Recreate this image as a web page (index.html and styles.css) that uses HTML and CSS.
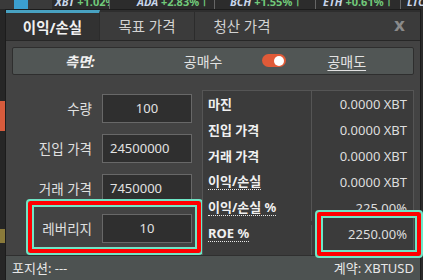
FILE: index.html
```
<!DOCTYPE html>
<html lang="ko">
<head>
    <meta charset="UTF-8">
    <title>계산기</title>
    <link rel="stylesheet" href="styles.css">
</head>
<body>
    <div class="ticker">
        <div class="tick-pad"><span class="blue-block"></span></div>
        <div class="tick t1"><span class="sym">XBT</span> <span class="up">+1.02%&#8593;</span></div>
        <div class="tick t2"><span class="sym">ADA</span> <span class="up">+2.83%&#8593;</span></div>
        <div class="tick t3"><span class="sym">BCH</span> <span class="up">+1.55%&#8593;</span></div>
        <div class="tick t4"><span class="sym">ETH</span> <span class="up">+0.61%&#8593;</span></div>
        <div class="tick t5"><span class="sym">LTC</span></div>
    </div>

    <div class="stage">
        <div class="edge">
            <span class="edge-mark orange"></span>
            <span class="edge-mark yellow"></span>
        </div>

        <div class="dialog">
            <!-- Tabs -->
            <div class="tabs">
                <div class="tab active">이익/손실</div>
                <div class="tab">목표 가격</div>
                <div class="tab">청산 가격</div>
                <div class="close">x</div>
            </div>

            <div class="panel">
                <div class="side-row">
                    <span class="side-label">측면:</span>
                    <span class="side-opt">공매수</span>
                    <span class="toggle"><span class="knob"></span></span>
                    <span class="side-opt selected">공매도</span>
                </div>

                <div class="calc">
                    <div class="fields">
                        <div class="field">
                            <label>수량</label>
                            <div class="input center">100</div>
                        </div>
                        <div class="field">
                            <label>진입 가격</label>
                            <div class="input">24500000</div>
                        </div>
                        <div class="field">
                            <label>거래 가격</label>
                            <div class="input">7450000</div>
                        </div>
                        <div class="field">
                            <label>레버리지</label>
                            <div class="input center">10</div>
                        </div>
                        <div class="mark mark-leverage"></div>
                    </div>

                    <div class="results">
                        <div class="res-row"><span class="res-label">마진</span><span class="res-value">0.0000 XBT</span></div>
                        <div class="res-row"><span class="res-label">진입 가격</span><span class="res-value">0.0000 XBT</span></div>
                        <div class="res-row"><span class="res-label">거래 가격</span><span class="res-value">0.0000 XBT</span></div>
                        <div class="res-row"><span class="res-label"><u>이익/손실</u></span><span class="res-value">0.0000 XBT</span></div>
                        <div class="res-row"><span class="res-label"><u>이익/손실 %</u></span><span class="res-value">225.00%</span></div>
                        <div class="res-row last"><span class="res-label"><u>ROE %</u></span><span class="res-value">2250.00%</span></div>
                        <div class="mark mark-roe"></div>
                    </div>
                </div>
            </div>

            <!-- Status bar -->
            <div class="footer">
                <span>포지션: ---</span>
                <span>계약: XBTUSD</span>
            </div>
        </div>
    </div>
</body>
</html>
```

FILE: styles.css
```
body {
    margin: 0;
    width: 423px;
    height: 280px;
    overflow: hidden;
    background-color: #2b2b2b;
    font-family: "Noto Sans", "Noto Sans CJK KR", sans-serif;
    color: #e2e2e2;
}

/* Ticker (only its lower edge shows above the dialog) */
.ticker {
    display: flex;
    height: 9px;
    overflow: hidden;
    background-color: #2c2c2c;
    font-size: 11px;
}

.ticker > div {
    flex-shrink: 0;
    box-sizing: border-box;
    height: 9px;
    overflow: hidden;
}

.tick-pad {
    width: 52px;
    background-color: #3a3a3a;
}

.blue-block {
    display: block;
    width: 14px;
    height: 9px;
    margin-left: 14px;
    background-color: #3b9fcf;
}

.tick {
    border-right: 1px solid #666;
    white-space: nowrap;
    line-height: 3px;
    font-weight: bold;
}

.t1 { width: 58px; padding-left: 3px; }
.t2 { width: 105px; padding-left: 27px; }
.t3 { width: 101px; padding-left: 15px; }
.t4 { width: 85px; padding-left: 7px; }
.t5 { width: 22px; padding-left: 6px; border-right: none; }

.sym {
    font-style: italic;
    color: #c9d6ea;
}

.up {
    color: #71c97a;
}

/* Page behind the dialog */
.stage {
    display: flex;
    height: 271px;
}

.edge {
    display: flex;
    flex-direction: column;
    width: 5px;
    background-color: #262626;
}

.edge-mark {
    display: block;
    width: 5px;
}

.edge-mark.orange {
    height: 30px;
    margin-top: 92px;
    background-color: #d75b3c;
}

.edge-mark.yellow {
    height: 14px;
    margin-top: 98px;
    background-color: #8a7a3a;
}

/* Dialog */
.dialog {
    display: flex;
    flex-direction: column;
    width: 414px;
    border: 1px solid #1c1c1c;
    border-bottom: none;
    background-color: #434343;
}

.tabs {
    display: flex;
    height: 29px;
    background-color: #3b3b3b;
    border-top: 2px solid #2e2e2e;
    border-bottom: 1px solid #272727;
}

.tab {
    display: flex;
    align-items: center;
    justify-content: center;
    width: 94px;
    border-right: 1px solid #2c2c2c;
    font-size: 14.5px;
    color: #d2d2d2;
}

.tab.active {
    width: 93px;
    margin-top: -2px;
    border-top: 3px solid #48a2c2;
    background-color: #323232;
    color: #f0f0f0;
    font-weight: bold;
}

.tab:nth-child(3) {
    border-right: none;
}

.close {
    margin-left: auto;
    width: 26px;
    padding-top: 3px;
    font-family: "DejaVu Sans", sans-serif;
    font-size: 17px;
    font-weight: bold;
    color: #8a8a8a;
}

.panel {
    display: flex;
    flex-direction: column;
    height: 216px;
    padding: 6px 6px 0 6px;
}

.side-row {
    display: flex;
    align-items: center;
    height: 26px;
    border: 1px solid #2e2e2e;
    border-radius: 2px;
    background-color: #515655;
    font-size: 14px;
}

.side-label {
    margin-left: 52px;
    font-weight: bold;
    font-style: italic;
    color: #f2f2f2;
}

.side-opt {
    margin-left: 89px;
}

.side-opt.selected {
    margin-left: 41px;
    text-decoration: underline;
    text-underline-offset: 3px;
}

.toggle {
    display: flex;
    justify-content: flex-end;
    align-items: center;
    width: 24px;
    height: 13px;
    margin-left: 40px;
    padding: 0 2px;
    box-sizing: border-box;
    border-radius: 7px;
    background-color: #e05a38;
}

.knob {
    width: 10px;
    height: 10px;
    border-radius: 50%;
    background-color: #fff;
}

.calc {
    display: flex;
    gap: 10px;
    margin-top: 15px;
}

.fields {
    position: relative;
    display: flex;
    flex-direction: column;
    gap: 11px;
    padding-top: 4px;
}

.field {
    display: flex;
    align-items: center;
    gap: 10px;
}

.field label {
    width: 80px;
    text-align: right;
    font-size: 13.5px;
    color: #e0e0e0;
}

.input {
    height: 27px;
    width: 81px;
    padding-left: 7px;
    border: 1px solid #686868;
    background-color: #2f2f2f;
    font-size: 13px;
    line-height: 27px;
}

.input.center {
    width: 88px;
    padding-left: 0;
    text-align: center;
}

/* Results table */
.results {
    position: relative;
    display: flex;
    flex-direction: column;
    width: 211px;
    border: 1px solid #555;
    border-bottom: none;
    background-color: #3b3b3b;
}

.res-row {
    display: flex;
    height: 26px;
    align-items: center;
    font-size: 13px;
}

.res-row.last {
    height: 34px;
    align-items: flex-start;
    padding-top: 4px;
    box-sizing: border-box;
}

.res-label {
    display: flex;
    align-items: center;
    width: 103px;
    height: 100%;
    padding-left: 5px;
    border-right: 1px solid #555;
    font-weight: bold;
    color: #f0f0f0;
}

.res-row.last .res-label {
    align-items: flex-start;
}

.res-label u {
    text-decoration: none;
    border-bottom: 1px dotted #e8e8e8;
    line-height: 16px;
}

.res-value {
    flex: 1;
    text-align: right;
    padding-right: 6px;
    color: #dedede;
}

/* Annotation boxes drawn over the dialog */
.mark {
    position: absolute;
    border: 2px solid #6fe6c6;
    border-radius: 4px;
    box-shadow: inset 0 0 0 4px #ff0000, inset 0 0 0 6px #6fe6c6;
}

.mark-leverage {
    left: 14px;
    top: 109px;
    width: 173px;
    height: 52px;
}

.mark-roe {
    left: 112px;
    top: 119px;
    width: 104px;
    height: 44px;
}

.footer {
    display: flex;
    justify-content: space-between;
    align-items: center;
    height: 25px;
    padding: 0 6px;
    border-top: 1px solid #2f2f2f;
    background-color: #4d5251;
    font-size: 13px;
    color: #e8e8e8;
}
```
